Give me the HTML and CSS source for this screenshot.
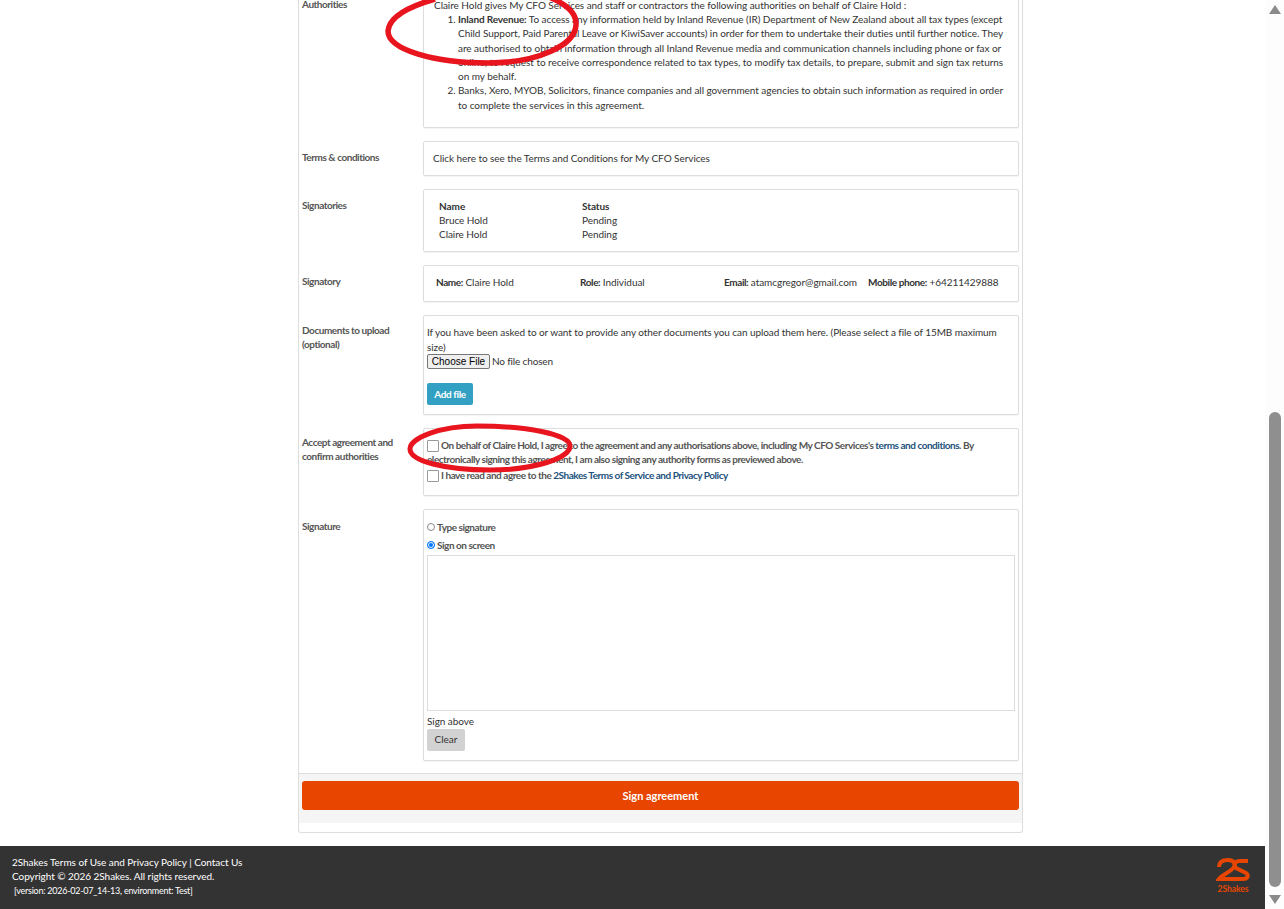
FILE: index.html
```html
<!DOCTYPE html>
<html lang="en">
<head>
<meta charset="utf-8">
<title>Sign agreement</title>
<link rel="stylesheet" href="styles.css">
</head>
<body>
<div class="shell">
  <div class="page">
    <main class="panel">
      <div class="rows">
        <section class="row">
          <div class="label">Authorities</div>
          <div class="box box-auth">
            <p class="intro">Claire Hold gives My CFO Services and staff or contractors the following authorities on behalf of Claire Hold :</p>
            <ol class="auth-list">
              <li><b class="inland">Inland Revenue:</b> To access any information held by Inland Revenue (IR) Department of New Zealand about all tax types (except Child Support, Paid Parental Leave or KiwiSaver accounts) in order for them to undertake their duties until further notice. They are authorised to obtain information through all Inland Revenue media and communication channels including phone or fax or online, to request to receive correspondence related to tax types, to modify tax details, to prepare, submit and sign tax returns on my behalf.</li>
              <li>Banks, Xero, MYOB, Solicitors, finance companies and all government agencies to obtain such information as required in order to complete the services in this agreement.</li>
            </ol>
          </div>
        </section>
        <section class="row">
          <div class="label">Terms &amp; conditions</div>
          <div class="box box-terms"><a class="link plain" href="#">Click here to see the Terms and Conditions for My CFO Services</a></div>
        </section>
        <section class="row">
          <div class="label">Signatories</div>
          <div class="box box-signers">
            <div class="signers">
              <b>Name</b><b>Status</b>
              <span>Bruce Hold</span><span>Pending</span>
              <span>Claire Hold</span><span>Pending</span>
            </div>
          </div>
        </section>
        <section class="row">
          <div class="label">Signatory</div>
          <div class="box box-signatory">
            <span class="sig-name"><b class="med">Name:</b> Claire Hold</span>
            <span class="sig-role"><b class="med">Role:</b> Individual</span>
            <span class="sig-email"><b class="med">Email:</b> atamcgregor@gmail.com</span>
            <span class="sig-phone"><b class="med">Mobile phone:</b> +64211429888</span>
          </div>
        </section>
        <section class="row">
          <div class="label label-up">Documents to upload (optional)</div>
          <div class="box box-docs">
            <p class="docs-text">If you have been asked to or want to provide any other documents you can upload them here. (Please select a file of 15MB maximum size)</p>
            <div class="file-line"><button class="file-btn" type="button">Choose File</button><span>No file chosen</span></div>
            <button class="add-btn" type="button">Add file</button>
          </div>
        </section>
        <section class="row">
          <div class="label label-up label-tight">Accept agreement and confirm authorities</div>
          <div class="box box-accept">
            <p class="accept-line"><span class="check"></span><span class="strongish">On behalf of Claire Hold, I agree to the agreement and any authorisations above, including My CFO Services's <a class="link" href="#">terms and conditions</a>. By electronically signing this agreement, I am also signing any authority forms as previewed above.</span></p>
            <p class="accept-line second"><span class="check"></span><span class="strongish">I have read and agree to the <a class="link" href="#">2Shakes Terms of Service and Privacy Policy</a></span></p>
          </div>
        </section>
        <section class="row">
          <div class="label label-down">Signature</div>
          <div class="box box-sign">
            <div class="radio-line first"><span class="radio"></span><span class="strongish">Type signature</span></div>
            <div class="radio-line"><span class="radio on"></span><span class="strongish">Sign on screen</span></div>
            <div class="pad"></div>
            <div class="sign-above">Sign above</div>
            <button class="clear-btn" type="button">Clear</button>
          </div>
        </section>
      </div>
      <div class="actions"><button class="sign-btn" type="button">Sign agreement</button></div>
    </main>
    <footer class="footer">
      <div class="foot-text">
        <div><a href="#">2Shakes Terms of Use and Privacy Policy</a> | <a href="#">Contact Us</a></div>
        <div>Copyright © 2026 2Shakes. All rights reserved.</div>
        <div class="version">[version: 2026-02-07_14-13, environment: Test]</div>
      </div>
      <div class="logo">
        <svg class="logo-mark" width="34" height="24" viewBox="0 0 34 24" aria-hidden="true">
          <path d="M3 9 C3 4 7 2 12 2 C18 2 20 6 18 9 C15 14 7 16 3 21 L22 21" fill="none" stroke="#e84600" stroke-width="4"/>
          <path d="M32 3 L24 3 C19 3 17 7 20 10 L30 15 C33 17 32 21 27 21 L20 21" fill="none" stroke="#e84600" stroke-width="4"/>
        </svg>
        <span class="logo-word">2Shakes</span>
      </div>
    </footer>
  </div>
  <div class="scrollbar" aria-hidden="true">
    <svg width="12" height="9" viewBox="0 0 12 9"><path d="M6 0 L12 9 L0 9 Z" fill="#8a8a8a"/></svg>
    <div class="track"><div class="thumb"></div></div>
    <svg width="12" height="9" viewBox="0 0 12 9"><path d="M0 0 L12 0 L6 9 Z" fill="#8a8a8a"/></svg>
  </div>
  <svg class="ink" width="1284" height="909" viewBox="0 0 1284 909" aria-hidden="true">
    <path d="M435 -1 C407 7 389 18 388 31 C388 50 435 63 488 63 C538 63 575 45 576 25 C577 13 566 4 549 -3" fill="none" stroke="#e8141e" stroke-width="5.5"/>
    <path d="M477 426 C440 426 410 438 410 449 C410 461 445 470 490 470 C535 470 570 458 570 446 C570 434 525 426 477 426 Z" fill="none" stroke="#e8141e" stroke-width="5"/>
  </svg>
</div>
</body>
</html>
```
FILE: styles.css
```css
* { box-sizing: border-box; }
html, body { margin: 0; height: 100%; }
body { font-family: Lato, "Open Sans", sans-serif; font-size: 10px; line-height: 14.28px; letter-spacing: -0.05px; color: #333; background: #fff; overflow: hidden; }
p { margin: 0; }
.shell { position: relative; display: flex; height: 909px; overflow: hidden; }
.page { flex: 1; min-width: 0; height: 909px; display: flex; flex-direction: column; justify-content: flex-end; overflow: hidden; }
.panel { flex: none; width: 725px; margin: 0 0 13px 298px; border: 1px solid #ddd; border-top: 0; border-radius: 0 0 3px 3px; padding-bottom: 9px; }
.rows { display: flex; flex-direction: column; gap: 13px; padding: 0 3px 12px; }
.row { display: grid; grid-template-columns: 121px 596px; }
.label { font-weight: 700; letter-spacing: -0.45px; color: #555; padding-top: 9px; padding-right: 20px; }
.label-up { padding-top: 8px; }
.label-tight { line-height: 13.5px; }
.label-down { padding-top: 10px; }
.box { border: 1px solid #ddd; border-radius: 2px; box-shadow: 0 1px 1px rgba(0,0,0,.05); background: #fff; }
.box-auth { padding: 9px 10px 15px; }
.auth-list { margin: 0; padding-left: 24px; letter-spacing: -0.04px; }
.inland { letter-spacing: -0.15px; }
.box-terms { padding: 9px; height: 35px; }
.link { color: #23527c; text-decoration: none; }
.link.plain { color: #333; }
.box-signers { padding: 9px 15px; height: 63px; line-height: 14px; }
.signers { display: grid; grid-template-columns: 143px 100px; }
.box-signatory { display: flex; padding: 9px 12px; height: 37px; }
.med { font-weight: 700; letter-spacing: -0.4px; }
.sig-name { width: 144px; } .sig-role { width: 144px; } .sig-email { width: 144px; white-space: nowrap; } .sig-phone { white-space: nowrap; }
.box-docs { padding: 9px 3px; height: 100px; }
.docs-text { line-height: 15px; letter-spacing: -0.08px; margin-bottom: -1px; }
.file-line { display: flex; align-items: center; gap: 2px; height: 15px; letter-spacing: -0.15px; }
.file-btn { font: 10px/13px "Liberation Sans", Arial, sans-serif; color: #000; background: #efefef; border: 1px solid #767676; border-radius: 2px; height: 15px; width: 63px; padding: 0; }
.add-btn { display: block; margin-top: 14px; width: 46px; height: 22px; border: 0; border-radius: 2px; background: #31a0c2; color: #fff; font: 700 10px Lato, sans-serif; letter-spacing: -0.4px; padding: 0; }
.box-accept { padding: 9px 3px; height: 68px; }
.check { display: inline-block; width: 12px; height: 12px; border: 1px solid #999; border-radius: 1px; background: #fff; vertical-align: -3px; margin-right: 2px; }
.strongish { font-weight: 700; letter-spacing: -0.47px; color: #555; }
.accept-line.second { margin-top: 1px; }
.box-sign { padding: 10px 3px; height: 252px; }
.radio-line { display: flex; align-items: center; gap: 2px; height: 14px; margin-top: 4px; }
.radio-line.first { margin-top: 0; }
.radio { width: 8px; height: 8px; border-radius: 50%; border: 1px solid #888; background: #fff; }
.radio.on { border-color: #0075ff; box-shadow: inset 0 0 0 1px #fff; background: #0075ff; }
.pad { height: 156px; border: 1px solid #ddd; margin-top: 3px; width: 588px; }
.sign-above { margin-top: 3px; }
.clear-btn { display: block; margin-top: 1px; width: 38px; height: 22px; border: 0; border-radius: 2px; background: #d2d2d2; color: #333; font: 10px Lato, sans-serif; padding: 0 0 2px; }
.actions { background: #f5f5f5; border-top: 1px solid #ddd; padding: 7px 3px 13px; }
.sign-btn { display: block; width: 717px; height: 29px; border: 0; border-radius: 3px; background: #e84600; color: #fff; font: 700 11px Lato, sans-serif; padding: 0; }
.footer { flex: none; height: 63px; background: #333; color: #fff; display: flex; justify-content: space-between; padding: 9px 15px 0 12px; }
.footer a { color: #fff; text-decoration: none; }
.version { font-size: 9px; letter-spacing: -0.25px; padding-left: 2px; }
.logo { display: flex; flex-direction: column; align-items: center; width: 34px; margin-top: 3px; }
.logo-mark { display: block; }
.logo-word { color: #e84600; font-size: 8.5px; font-weight: 700; line-height: 9px; margin-top: 3px; white-space: nowrap; }
.scrollbar { flex: none; width: 19px; background: #fdfdfd; display: flex; flex-direction: column; align-items: center; padding: 5px 0; }
.track { flex: 1; width: 12px; display: flex; flex-direction: column; justify-content: flex-end; padding-bottom: 8px; }
.thumb { height: 475px; background: #8f8f8f; border-radius: 6px; }
.ink { position: absolute; left: 0; top: 0; pointer-events: none; }
```
